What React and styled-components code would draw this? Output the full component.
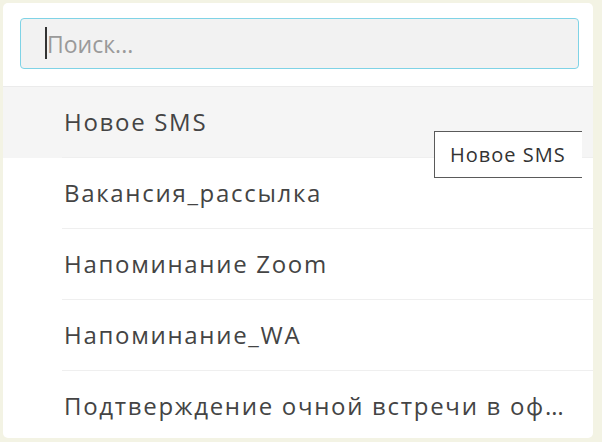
import React from "react"
import styled, { createGlobalStyle } from "styled-components"

const GlobalStyle = createGlobalStyle`
  html, body {
    margin: 0;
    padding: 0;
    background: #f3f3e4;
  }
  body {
    padding: 3px 9px 4px 3px;
    font-family: "Open Sans", "Noto Sans", sans-serif;
  }
`

const Panel = styled.div`
  background: #fff;
  border-radius: 5px;
  height: 435px;
  box-sizing: border-box;
  overflow: hidden;
  position: relative;
`

const SearchBox = styled.div`
  position: relative;
  padding: 15px 14px 17px 17px;
`

const SearchInput = styled.input`
  display: block;
  width: 100%;
  height: 51px;
  box-sizing: border-box;
  border: 1px solid #7fd3e6;
  border-radius: 4px;
  background: #f2f2f2;
  padding: 0 0 0 26px;
  font-family: "Open Sans", "Noto Sans", sans-serif;
  font-size: 23px;
  color: #333;
  outline: none;
  caret-color: transparent;

  &::placeholder {
    color: #9a9a9a;
  }
`

const Caret = styled.span`
  position: absolute;
  left: 42px;
  top: 24px;
  width: 1.5px;
  height: 32px;
  background: #333;
`

const List = styled.ul`
  list-style: none;
  margin: 0;
  padding: 0;
  border-top: 1px solid #ebebeb;
`

const Item = styled.li`
  background: ${(p) => (p.$hover ? "#f5f5f5" : "transparent")};
  padding-left: 59px;
`

const ItemText = styled.div`
  height: 70px;
  line-height: 70px;
  padding-left: 2px;
  font-size: 24px;
  letter-spacing: 1.7px;
  color: #444;
  white-space: nowrap;
  overflow: hidden;
  text-overflow: ellipsis;
  padding-right: 18px;
  border-bottom: 1px solid #efefef;
`

const Tooltip = styled.div`
  position: absolute;
  left: 431px;
  top: 128px;
  width: 148px;
  height: 47px;
  box-sizing: border-box;
  background: #fff;
  border: 1px solid #5a5a5a;
  border-right: none;
  padding-left: 15px;
  line-height: 45px;
  font-family: "Open Sans", "Noto Sans", sans-serif;
  font-size: 20px;
  letter-spacing: 1px;
  color: #333;
  white-space: nowrap;
`

const items = [
  "Новое SMS",
  "Вакансия_рассылка",
  "Напоминание Zoom",
  "Напоминание_WA",
  "Подтверждение очной встречи в офисе",
]

export default function App() {
  return (
    <>
      <GlobalStyle />
      <Panel>
        <SearchBox>
          <SearchInput placeholder="Поиск..." />
          <Caret />
        </SearchBox>
        <List>
          {items.map((t, i) => (
            <Item key={t} $hover={i === 0}>
              <ItemText>{t}</ItemText>
            </Item>
          ))}
        </List>
        <Tooltip>Новое SMS</Tooltip>
      </Panel>
    </>
  )
}
